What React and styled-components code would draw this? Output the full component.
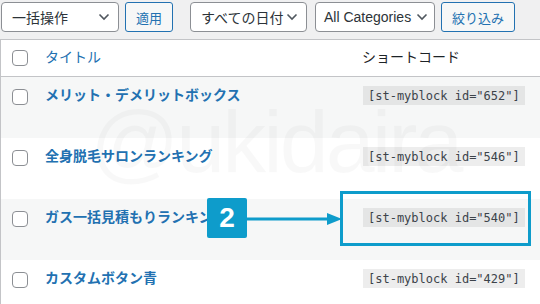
import styled, { createGlobalStyle } from "styled-components";

const GlobalStyle = createGlobalStyle`
	html, body {
		margin: 0;
		padding: 0;
		background: #f0f0f1;
	}
	body {
		font-family: "Liberation Sans", "Noto Sans CJK JP", sans-serif;
		color: #2c3338;
	}
`;

const Page = styled.div`
	position: relative;
	width: 540px;
	height: 304px;
	overflow: hidden;
	background: #f0f0f1;
`;

const Toolbar = styled.div`
	display: flex;
	align-items: center;
	height: 30px;
	padding: 2px 0 0 1px;
	margin-bottom: 7px;
`;

const Select = styled.div`
	display: flex;
	align-items: center;
	justify-content: space-between;
	box-sizing: border-box;
	width: ${(p) => p.width}px;
	height: 30px;
	margin-right: ${(p) => p.gap || 0}px;
	padding: 0 ${(p) => p.padRight || 8}px 0 ${(p) => p.pad || 10}px;
	background: #fff;
	border: 1px solid #8c8f94;
	border-radius: 4px;
	font-size: 14px;
	color: #2c3338;
	white-space: nowrap;
`;

const Button = styled.div`
	display: flex;
	align-items: center;
	justify-content: center;
	box-sizing: border-box;
	width: ${(p) => p.width}px;
	height: 30px;
	margin-right: ${(p) => p.gap || 0}px;
	background: #f6f7f7;
	border: 1px solid #2271b1;
	border-radius: 3px;
	color: #2271b1;
	font-size: 13px;
`;

const Table = styled.div`
	background: #fff;
	border-top: 1px solid #c3c4c7;
	border-left: 1px solid #c3c4c7;
`;

const Row = styled.div`
	display: grid;
	grid-template-columns: 44px 1fr 178px;
	box-sizing: border-box;
	height: ${(p) => (p.head ? 37 : 61)}px;
	background: ${(p) => (p.striped ? "#f6f7f7" : "#fff")};
	border-bottom: ${(p) => (p.head ? "1px solid #c3c4c7" : "none")};
`;

const CheckCell = styled.div`
	padding: ${(p) => (p.head ? 10 : 12)}px 0 0 11px;
`;

const Checkbox = styled.div`
	box-sizing: border-box;
	width: 16px;
	height: 16px;
	border: 1px solid #8c8f94;
	border-radius: 4px;
	background: #fff;
`;

const TitleCell = styled.div`
	padding-top: ${(p) => (p.head ? 7 : 8)}px;
	font-size: 14px;
	line-height: 21px;
	color: #2271b1;
	font-weight: ${(p) => (p.head ? 400 : 700)};
	white-space: nowrap;
`;

const CodeCell = styled.div`
	padding-top: ${(p) => (p.head ? 7 : 8)}px;
	font-size: 14px;
	line-height: 21px;
	color: #1d2327;
`;

const Code = styled.code`
	display: inline-block;
	padding: 1px 5px 0;
	height: 19px;
	line-height: 19px;
	box-sizing: border-box;
	margin-left: 1px;
	background: rgba(0, 0, 0, 0.07);
	font-family: "DejaVu Sans Mono", "Liberation Mono", monospace;
	font-size: 12px;
	color: #3c434a;
	white-space: nowrap;
`;

const Watermark = styled.div`
	position: absolute;
	left: 90px;
	top: 98px;
	font-family: "Liberation Sans", sans-serif;
	font-size: 88px;
	line-height: 1;
	letter-spacing: -3px;
	color: rgba(0, 0, 0, 0.028);
	pointer-events: none;
`;

const Badge = styled.div`
	position: absolute;
	left: 207px;
	top: 198px;
	width: 40px;
	height: 40px;
	display: flex;
	align-items: center;
	justify-content: center;
	background: #0e9ccb;
	border-radius: 2px;
	color: #fff;
	font-family: "Liberation Sans", sans-serif;
	font-weight: 700;
	font-size: 28px;
`;

const Arrow = styled.svg`
	position: absolute;
	left: 247px;
	top: 211px;
`;

const Highlight = styled.div`
	position: absolute;
	left: 340px;
	top: 191px;
	width: 191px;
	height: 55px;
	box-sizing: border-box;
	border: 3px solid #0e9ccb;
`;

const Chevron = () => (
	<svg width="12" height="8" viewBox="0 0 12 8">
		<polyline points="1.5,1.5 6,6 10.5,1.5" fill="none" stroke="#50575e" strokeWidth="1.6" />
	</svg>
);

const posts = [
	{ title: "メリット・デメリットボックス", id: "652" },
	{ title: "全身脱毛サロンランキング", id: "546" },
	{ title: "ガス一括見積もりランキング", id: "540" },
	{ title: "カスタムボタン青", id: "429" },
];

const App = () => {
	return (
		<Page>
			<GlobalStyle />
			<Toolbar>
				<Select width={118} gap={6}>
					一括操作 <Chevron />
				</Select>
				<Button width={48} gap={17}>
					適用
				</Button>
				<Select width={117} gap={8}>
					すべての日付 <Chevron />
				</Select>
				<Select width={120} gap={6} pad={8} padRight={6}>
					All Categories <Chevron />
				</Select>
				<Button width={74}>絞り込み</Button>
			</Toolbar>
			<Table>
				<Row head>
					<CheckCell head>
						<Checkbox />
					</CheckCell>
					<TitleCell head>タイトル</TitleCell>
					<CodeCell head>ショートコード</CodeCell>
				</Row>
				{posts.map((post, i) => (
					<Row key={post.id} striped={i % 2 === 0}>
						<CheckCell>
							<Checkbox />
						</CheckCell>
						<TitleCell>{post.title}</TitleCell>
						<CodeCell>
							<Code>[st-myblock id="{post.id}"]</Code>
						</CodeCell>
					</Row>
				))}
			</Table>
			<Watermark>@ukidaira</Watermark>
			<Highlight />
			<Arrow width="96" height="16" viewBox="0 0 96 16">
				<line x1="0" y1="8" x2="82" y2="8" stroke="#0e9ccb" strokeWidth="3" />
				<polygon points="80,2 95,8 80,14" fill="#0e9ccb" />
			</Arrow>
			<Badge>2</Badge>
		</Page>
	);
};

export default App;
